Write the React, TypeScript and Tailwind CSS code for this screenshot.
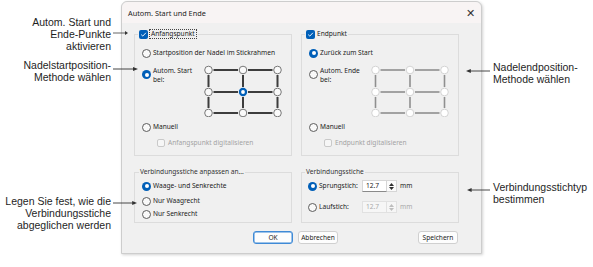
import React from "react";

function Radio({ checked = false, disabled = false }: { checked?: boolean; disabled?: boolean }) {
  if (checked) {
    return (
      <span className="flex h-[9px] w-[9px] shrink-0 items-center justify-center rounded-full bg-[#005fb8]">
        <span className="h-[4px] w-[4px] rounded-full bg-white" />
      </span>
    );
  }
  return (
    <span
      className={
        disabled
          ? "block h-[9px] w-[9px] shrink-0 rounded-full border border-[#c4c4c4] bg-[#f7f7f7]"
          : "block h-[9px] w-[9px] shrink-0 rounded-full border border-[#5c5c5c] bg-[#f9f9f9]"
      }
    />
  );
}

function CheckBox({ checked = false }: { checked?: boolean }) {
  if (checked) {
    return (
      <span className="flex h-[9px] w-[9px] shrink-0 items-center justify-center rounded-[2px] bg-[#005fb8]">
        <svg width="7" height="7" viewBox="0 0 7 7">
          <path d="M1.2 3.6 L2.8 5.1 L5.9 1.8" fill="none" stroke="white" strokeWidth="0.9" />
        </svg>
      </span>
    );
  }
  return <span className="block h-[8px] w-[8px] shrink-0 rounded-[2px] border border-[#c9c9c9] bg-[#f6f6f6]" />;
}

function Grid({ active }: { active: boolean }) {
  const xs = [4.5, 39, 73.5];
  const ys = [5, 27, 48];
  const line = active ? "#3d3d3d" : "#8f8f8f";
  const sw = active ? 2 : 1.6;
  const segs: React.ReactNode[] = [];
  ys.forEach((y, r) => {
    segs.push(<line key={`h1${r}`} x1={xs[0] + 5} y1={y} x2={xs[1] - 5} y2={y} stroke={line} strokeWidth={sw} />);
    segs.push(<line key={`h2${r}`} x1={xs[1] + 5} y1={y} x2={xs[2] - 5} y2={y} stroke={line} strokeWidth={sw} />);
  });
  xs.forEach((x, c) => {
    segs.push(<line key={`v1${c}`} x1={x} y1={ys[0] + 5} x2={x} y2={ys[1] - 5} stroke={line} strokeWidth={sw} />);
    segs.push(<line key={`v2${c}`} x1={x} y1={ys[1] + 5} x2={x} y2={ys[2] - 5} stroke={line} strokeWidth={sw} />);
  });
  const circles: React.ReactNode[] = [];
  ys.forEach((y, r) =>
    xs.forEach((x, c) => {
      const sel = active && r === 1 && c === 1;
      circles.push(
        sel ? (
          <g key={`c${r}${c}`}>
            <circle cx={x} cy={y} r={4.2} fill="#005fb8" />
            <circle cx={x} cy={y} r={1.9} fill="white" />
          </g>
        ) : (
          <circle
            key={`c${r}${c}`}
            cx={x}
            cy={y}
            r={3.8}
            fill={active ? "#fafafa" : "#ffffff"}
            stroke={active ? "#6a6a6a" : "#cfcfcf"}
            strokeWidth={0.9}
          />
        )
      );
    })
  );
  return (
    <svg width="80" height="52" viewBox="0 0 80 52" className="ml-[2px] shrink-0">
      {segs}
      {circles}
    </svg>
  );
}

function Arrow({ dir, className }: { dir: "left" | "right"; className: string }) {
  return (
    <svg className={className} viewBox="0 0 30 6" preserveAspectRatio="none">
      {dir === "right" ? (
        <>
          <line x1="0" y1="3" x2="26" y2="3" stroke="#333" strokeWidth="1" />
          <polygon points="24,1 30,3 24,5" fill="#333" />
        </>
      ) : (
        <>
          <line x1="4" y1="3" x2="30" y2="3" stroke="#333" strokeWidth="1" />
          <polygon points="6,1 0,3 6,5" fill="#333" />
        </>
      )}
    </svg>
  );
}

function Spin({ value, disabled = false }: { value: string; disabled?: boolean }) {
  const tri = disabled ? "#bdbdbd" : "#2e2e2e";
  return (
    <div className="ml-[2px] flex h-[12px] items-stretch">
      <div
        className={
          disabled
            ? "flex w-[25px] items-center border border-[#e1e1e1] bg-[#f6f6f6] pl-[3px] text-[#a9a9a9]"
            : "flex w-[25px] items-center border border-[#d6d6d6] border-b-[#8a8a8a] bg-white pl-[3px] text-[#1a1a1a]"
        }
      >
        {value}
      </div>
      <div
        className={
          disabled
            ? "flex w-[10px] flex-col items-center justify-center gap-[1px] border border-l-0 border-[#e1e1e1] bg-[#f6f6f6]"
            : "flex w-[10px] flex-col items-center justify-center gap-[1px] border border-l-0 border-[#d6d6d6] bg-[#fbfbfb]"
        }
      >
        <svg width="5" height="3" viewBox="0 0 5 3">
          <polygon points="0,3 2.5,0 5,3" fill={tri} />
        </svg>
        <svg width="5" height="3" viewBox="0 0 5 3">
          <polygon points="0,0 2.5,3 5,0" fill={tri} />
        </svg>
      </div>
    </div>
  );
}

export default function App() {
  return (
    <div className="relative flex h-[267px] w-[593px] overflow-hidden bg-white">
      {/* left annotations */}
      <div className="flex w-[121px] shrink-0 flex-col items-end pr-[10px] text-right font-['Liberation_Sans',sans-serif] text-[10.5px] leading-[12px] text-[#1e1e1e]">
        <div className="mt-[16px]">
          Autom. Start und
          <br />
          Ende-Punkte
          <br />
          aktivieren
        </div>
        <div className="mt-[7px]">
          Nadelstartposition-
          <br />
          Methode wählen
        </div>
        <div className="mt-[112px]">
          Legen Sie fest, wie die
          <br />
          Verbindungsstiche
          <br />
          abgeglichen werden
        </div>
      </div>

      {/* dialog */}
      <div className="mt-[1px] flex h-[253px] w-[361px] shrink-0 flex-col rounded-t-[6px] border border-[#cdcdcd] bg-[#f0f0f0] font-['Noto_Sans',sans-serif] text-[6.6px] leading-[10px] text-[#1b1b1b] shadow-[1px_1px_3px_rgba(0,0,0,0.18)]">
        <div className="flex h-[21px] items-center justify-between rounded-t-[6px] bg-[#f8f4f4] pl-[6px] pr-[6px]">
          <span className="text-[7.3px]">Autom. Start und Ende</span>
          <span className="text-[11px] font-light leading-none text-[#333]">✕</span>
        </div>

        <div className="flex flex-col pl-[12px] pr-[22px]">
          {/* top group boxes */}
          <div className="mt-[6px] flex gap-[9px]">
            <fieldset className="w-[158px] border border-[#dcdcdc] pb-[7px]">
              <legend className="ml-[3px] flex h-[10px] items-center px-[1px]">
                <CheckBox checked />
                <span className="ml-[1px] border border-dotted border-[#444] px-[1px] leading-[8px]">Anfangspunkt</span>
              </legend>
              <div className="mt-[9px] flex h-[10px] items-center pl-[7px]">
                <Radio />
                <span className="ml-[2px]">Startposition der Nadel im Stickrahmen</span>
              </div>
              <div className="mt-[7px] flex items-start pl-[7px]">
                <span className="mt-[5px] flex">
                  <Radio checked />
                </span>
                <span className="ml-[2px] mt-[1px] w-[49px] leading-[9px]">
                  Autom. Start
                  <br />
                  bei:
                </span>
                <Grid active />
              </div>
              <div className="mt-[5px] flex h-[10px] items-center pl-[7px]">
                <Radio />
                <span className="ml-[2px]">Manuell</span>
              </div>
              <div className="mt-[6px] flex h-[10px] items-center pl-[22px] text-[#a3a3a3]">
                <CheckBox />
                <span className="ml-[3px]">Anfangspunkt digitalisieren</span>
              </div>
            </fieldset>

            <fieldset className="w-[158px] border border-[#dcdcdc] pb-[7px]">
              <legend className="ml-[3px] flex h-[10px] items-center px-[1px]">
                <CheckBox checked />
                <span className="ml-[2px] leading-[8px]">Endpunkt</span>
              </legend>
              <div className="mt-[9px] flex h-[10px] items-center pl-[7px]">
                <Radio checked />
                <span className="ml-[2px]">Zurück zum Start</span>
              </div>
              <div className="mt-[7px] flex items-start pl-[7px]">
                <span className="mt-[5px] flex">
                  <Radio />
                </span>
                <span className="ml-[2px] mt-[1px] w-[49px] leading-[9px]">
                  Autom. Ende
                  <br />
                  bei:
                </span>
                <Grid active={false} />
              </div>
              <div className="mt-[5px] flex h-[10px] items-center pl-[7px]">
                <Radio />
                <span className="ml-[2px]">Manuell</span>
              </div>
              <div className="mt-[6px] flex h-[10px] items-center pl-[22px] text-[#a3a3a3]">
                <CheckBox />
                <span className="ml-[3px]">Endpunkt digitalisieren</span>
              </div>
            </fieldset>
          </div>

          {/* bottom group boxes */}
          <div className="mt-[11px] flex gap-[9px]">
            <fieldset className="w-[158px] border border-[#dcdcdc] pb-[3px]">
              <legend className="ml-[4px] h-[10px] px-[1px] text-[#333]">Verbindungsstiche anpassen an...</legend>
              <div className="mt-[4px] flex h-[10px] items-center pl-[7px]">
                <Radio checked />
                <span className="ml-[2px]">Waage- und Senkrechte</span>
              </div>
              <div className="mt-[5px] flex h-[10px] items-center pl-[7px]">
                <Radio />
                <span className="ml-[2px]">Nur Waagrecht</span>
              </div>
              <div className="mt-[3px] flex h-[10px] items-center pl-[7px]">
                <Radio />
                <span className="ml-[2px]">Nur Senkrecht</span>
              </div>
            </fieldset>

            <fieldset className="w-[158px] border border-[#dcdcdc] pb-[9px]">
              <legend className="ml-[3px] h-[10px] px-[1px] text-[#333]">Verbindungsstiche</legend>
              <div className="mt-[3px] flex h-[12px] items-center pl-[6px]">
                <Radio checked />
                <span className="ml-[2px] w-[41px]">Sprungstich:</span>
                <Spin value="12.7" />
                <span className="ml-[3px]">mm</span>
              </div>
              <div className="mt-[9px] flex h-[12px] items-center pl-[6px]">
                <Radio />
                <span className="ml-[2px] w-[41px]">Laufstich:</span>
                <Spin value="12.7" disabled />
                <span className="ml-[3px] text-[#a9a9a9]">mm</span>
              </div>
            </fieldset>
          </div>

          {/* buttons */}
          <div className="mt-[8px] flex h-[13px]">
            <button className="ml-[119px] flex h-[13px] w-[40px] items-center justify-center rounded-[3px] border border-[#3f8ad6] bg-[#fdfdfd] shadow-[inset_0_0_0_0.5px_#3f8ad6]">
              OK
            </button>
            <button className="ml-[5px] flex h-[13px] w-[40px] items-center justify-center rounded-[3px] border border-[#d0d0d0] bg-[#fdfdfd]">
              Abbrechen
            </button>
            <button className="ml-auto mr-[1px] flex h-[13px] w-[40px] items-center justify-center rounded-[3px] border border-[#d0d0d0] bg-[#fdfdfd]">
              Speichern
            </button>
          </div>
        </div>
      </div>

      {/* right annotations */}
      <div className="flex flex-1 flex-col pl-[11px] font-['Liberation_Sans',sans-serif] text-[10.5px] leading-[12px] text-[#1e1e1e]">
        <div className="mt-[61px]">
          Nadelendposition-
          <br />
          Methode wählen
        </div>
        <div className="mt-[96px]">
          Verbindungsstichtyp
          <br />
          bestimmen
        </div>
      </div>

      {/* leader arrows */}
      <Arrow dir="right" className="absolute left-[113px] top-[30px] h-[6px] w-[15px]" />
      <Arrow dir="right" className="absolute left-[113px] top-[66px] h-[6px] w-[25px]" />
      <Arrow dir="right" className="absolute left-[113px] top-[200px] h-[6px] w-[24px]" />
      <Arrow dir="left" className="absolute left-[466px] top-[68px] h-[6px] w-[24px]" />
      <Arrow dir="left" className="absolute left-[467px] top-[187px] h-[6px] w-[23px]" />
    </div>
  );
}
